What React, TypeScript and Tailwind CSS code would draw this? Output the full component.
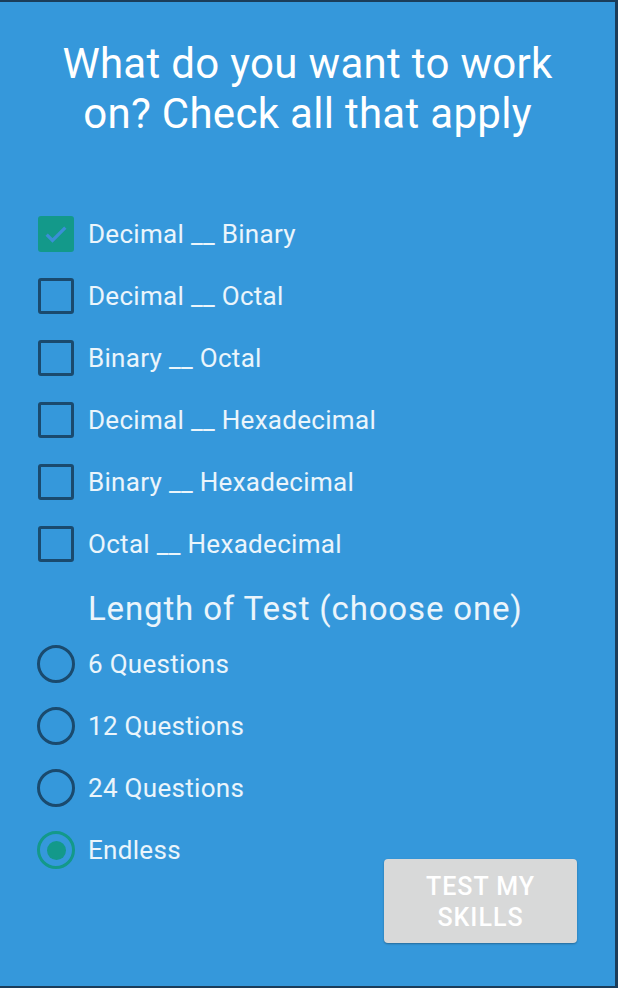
import { useState } from "react";

const conversions = [
  "Decimal __ Binary",
  "Decimal __ Octal",
  "Binary __ Octal",
  "Decimal __ Hexadecimal",
  "Binary __ Hexadecimal",
  "Octal __ Hexadecimal",
];

const lengths = ["6 Questions", "12 Questions", "24 Questions"];

const Check = ({ on }: { on: boolean }) =>
  on ? (
    <span className="flex items-center justify-center w-[36px] h-[36px] rounded-[3px] bg-[#13998a]">
      <svg width="28" height="28" viewBox="0 0 24 24" fill="none">
        <path d="M4 12.5l5 5L20 6.5" stroke="#3a8fd6" strokeWidth="2.8" />
      </svg>
    </span>
  ) : (
    <span className="block w-[36px] h-[36px] rounded-[3px] border-[3px] border-[#1a4a6e]" />
  );

const Radio = ({ on }: { on: boolean }) =>
  on ? (
    <span className="flex items-center justify-center w-[38px] h-[38px] rounded-full border-[3px] border-[#13998a]">
      <span className="block w-[19px] h-[19px] rounded-full bg-[#13998a]" />
    </span>
  ) : (
    <span className="block w-[38px] h-[38px] rounded-full border-[3px] border-[#1a4a6e]" />
  );

const App = () => {
  const [checked, setChecked] = useState<boolean[]>([true, false, false, false, false, false]);
  const [len, setLen] = useState("Endless");

  const rowStyle = "flex items-center h-[62px] cursor-pointer";
  const labelStyle = "text-[26px] tracking-[0.3px] text-white/90";

  return (
    <div className="w-[618px] h-[988px] bg-[#3598db] border-t-2 border-b-2 border-r-[3px] border-[#1b3d5a] font-['Roboto',sans-serif]">
      <h1 className="pt-[37px] px-[48px] text-center text-[42px] tracking-[0.3px] leading-[50px] text-white">
        What do you want to work on? Check all that apply
      </h1>

      <div className="mt-[64px] pl-[38px]">
        {conversions.map((c, i) => (
          <div
            key={c}
            className={rowStyle}
            onClick={() => setChecked(checked.map((v, j) => (j === i ? !v : v)))}
          >
            <Check on={checked[i]} />
            <span className={"ml-[14px] " + labelStyle}>{c}</span>
          </div>
        ))}
      </div>

      <p className="pl-[88px] mt-[14px] text-[33px] tracking-[0.85px] leading-[40px] text-white/90">
        Length of Test (choose one)
      </p>

      <div className="pl-[37px] mt-[4px]">
        {lengths.map((l) => (
          <div key={l} className={rowStyle} onClick={() => setLen(l)}>
            <Radio on={len === l} />
            <span className={"ml-[13px] " + labelStyle}>{l}</span>
          </div>
        ))}
        <div className="flex items-start justify-between pr-[38px]">
          <div className={rowStyle} onClick={() => setLen("Endless")}>
            <Radio on={len === "Endless"} />
            <span className={"ml-[13px] " + labelStyle}>Endless</span>
          </div>
          <button className="mt-[40px] w-[193px] h-[84px] rounded-[4px] bg-[#d8d9d9] shadow-[0_1px_2px_rgba(0,0,0,0.3)] text-white text-[25px] tracking-[1px] leading-[31px] font-medium px-[28px] pt-[2px]">
            TEST MY SKILLS
          </button>
        </div>
      </div>
    </div>
  );
};

export default App;
